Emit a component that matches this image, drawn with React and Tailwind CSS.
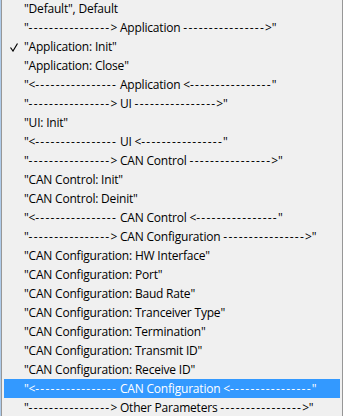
import React from "react";

const D = "----------------";
const items = [
  { t: '"Default", Default' },
  { t: `"${D}> Application ${D}>"` },
  { t: '"Application: Init"', checked: true },
  { t: '"Application: Close"' },
  { t: `"<${D} Application <${D}"` },
  { t: `"${D}> UI ${D}>"` },
  { t: '"UI: Init"' },
  { t: `"<${D} UI <${D}"` },
  { t: `"${D}> CAN Control ${D}>"` },
  { t: '"CAN Control: Init"' },
  { t: '"CAN Control: Deinit"' },
  { t: `"<${D} CAN Control <${D}"` },
  { t: `"${D}> CAN Configuration ${D}>"` },
  { t: '"CAN Configuration: HW Interface"' },
  { t: '"CAN Configuration: Port"' },
  { t: '"CAN Configuration: Baud Rate"' },
  { t: '"CAN Configuration: Tranceiver Type"' },
  { t: '"CAN Configuration: Termination"' },
  { t: '"CAN Configuration: Transmit ID"' },
  { t: '"CAN Configuration: Receive ID"' },
  { t: `"<${D} CAN Configuration <${D}"`, selected: true },
  { t: `"${D}> Other Parameters ${D}>"` },
];

function Label({ text }) {
  const parts = text.split(/(-{2,})/);
  return (
    <span>
      {parts.map((p, i) =>
        /^-{2,}$/.test(p) ? (
          <span key={i} className="tracking-[1.25px]">
            {p}
          </span>
        ) : (
          <span key={i}>{p}</span>
        )
      )}
    </span>
  );
}

export default function App() {
  return (
    <div
      className="flex w-[343px] h-[416px] overflow-hidden bg-[#f0f0f0]"
      style={{ fontFamily: '"Open Sans", "Noto Sans", sans-serif' }}
    >
      <div className="w-px h-full bg-[#aecbea]" />
      <div className="flex-1 h-full border-l border-r border-[#979797] px-[2px]">
        <div className="-mt-px flex flex-col">
          {items.map((it, i) => (
            <div
              key={i}
              className={
                "relative h-[19px] flex items-center pl-[20px] text-[12px] leading-none whitespace-nowrap tracking-[-0.2px] " +
                (it.selected ? "bg-[#3399ff] text-white" : "text-black")
              }
            >
              {it.checked && (
                <svg
                  className="absolute left-[6px] top-[6px]"
                  width="8"
                  height="9"
                  viewBox="0 0 8 9"
                >
                  <path d="M0.5 4.5 L3 8 L7.5 0.5" fill="none" stroke="#000" strokeWidth="1.2" />
                </svg>
              )}
              <Label text={it.t} />
            </div>
          ))}
        </div>
      </div>
    </div>
  );
}
